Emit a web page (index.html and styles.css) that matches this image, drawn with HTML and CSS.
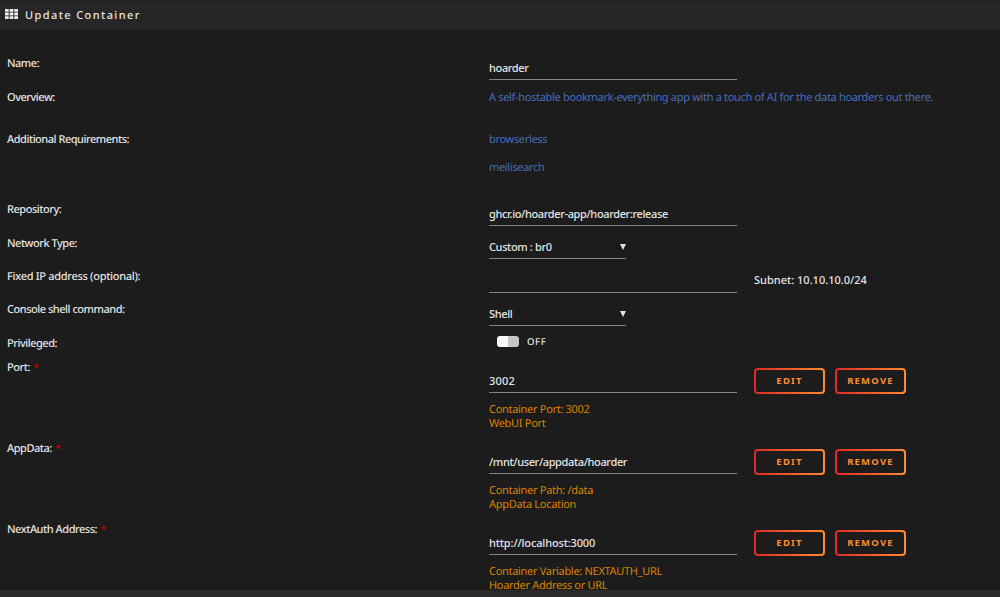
FILE: index.html
```html
<!DOCTYPE html>
<html lang="en">
  <head>
    <meta charset="UTF-8" />
    <meta name="viewport" content="width=device-width, initial-scale=1.0" />
    <title>Update Container</title>
    <link rel="stylesheet" href="styles.css">
  </head>
  <body>
    <header class="title">
      <svg class="title-icon" viewBox="0 0 13 10" aria-hidden="true">
        <path d="M0 0h3.7v2.8H0zM4.6 0h3.8v2.8H4.6zM9.3 0H13v2.8H9.3zM0 3.6h3.7v2.8H0zM4.6 3.6h3.8v2.8H4.6zM9.3 3.6H13v2.8H9.3zM0 7.2h3.7V10H0zM4.6 7.2h3.8V10H4.6zM9.3 7.2H13V10H9.3z" />
      </svg>
      <h1>Update Container</h1>
    </header>

    <form class="settings">
      <div class="row">
        <label for="name">Name:</label>
        <input id="name" type="text" value="hoarder" />
      </div>
      <div class="row row-overview">
        <span class="label">Overview:</span>
        <a>A self-hostable bookmark-everything app with a touch of AI for the data hoarders out there.</a>
      </div>
      <div class="row row-requires">
        <span class="label">Additional Requirements:</span>
        <div class="requires">
          <a>browserless</a>
          <a>meilisearch</a>
        </div>
      </div>
      <div class="row row-repo">
        <label for="repository">Repository:</label>
        <input id="repository" type="text" value="ghcr.io/hoarder-app/hoarder:release" />
      </div>
      <div class="row">
        <label class="label-network" for="network">Network Type:</label>
        <div class="select">
          <select id="network">
            <option>Custom : br0</option>
          </select>
        </div>
      </div>
      <div class="row row-ip">
        <label class="label-ip" for="ip">Fixed IP address (optional):</label>
        <input id="ip" type="text" />
        <span class="subnet">Subnet: 10.10.10.0/24</span>
      </div>
      <div class="row">
        <label for="shell">Console shell command:</label>
        <div class="select">
          <select id="shell">
            <option>Shell</option>
          </select>
        </div>
      </div>
      <div class="row row-privileged">
        <span class="label">Privileged:</span>
        <div class="toggle">
          <span class="switch"></span>
          <span class="state">OFF</span>
        </div>
      </div>

      <div class="row row-config">
        <label for="port">Port: <span class="required">*</span></label>
        <div class="field">
          <input class="number" id="port" type="text" value="3002" />
          <p class="help">Container Port: 3002<br />WebUI Port</p>
        </div>
        <div class="buttons">
          <button type="button">Edit</button>
          <button type="button">Remove</button>
        </div>
      </div>
      <div class="row row-config">
        <label for="appdata">AppData: <span class="required">*</span></label>
        <div class="field">
          <input id="appdata" type="text" value="/mnt/user/appdata/hoarder" />
          <p class="help">Container Path: /data<br />AppData Location</p>
        </div>
        <div class="buttons">
          <button type="button">Edit</button>
          <button type="button">Remove</button>
        </div>
      </div>
      <div class="row row-config">
        <label for="nextauth">NextAuth Address: <span class="required">*</span></label>
        <div class="field">
          <input class="url" id="nextauth" type="text" value="http://localhost:3000" />
          <p class="help">Container Variable: NEXTAUTH_URL<br />Hoarder Address or URL</p>
        </div>
        <div class="buttons">
          <button type="button">Edit</button>
          <button type="button">Remove</button>
        </div>
      </div>
    </form>

    <footer class="footer"></footer>
  </body>
</html>
```

FILE: styles.css
```css
:root {
  --bg: #1c1c1c;
  --text: #e4e4e4;
  --line: #858585;
  --link: #486dba;
  --help: #d98200;
  --red: #e22828;
  --orange: #ff8c2f;
}

* {
  box-sizing: border-box;
}

body {
  display: flex;
  flex-direction: column;
  height: 100vh;
  margin: 0;
  overflow: hidden;
  background: var(--bg);
  color: var(--text);
  font: 500 11px/18px "Noto Sans", sans-serif;
  text-rendering: geometricPrecision;
}

.title {
  display: flex;
  align-items: center;
  gap: 7px;
  flex: none;
  height: 30px;
  padding-left: 5px;
  border-top: 1px solid #1f1f1f;
  background: #262626;
}

.title-icon {
  width: 13px;
  height: 10px;
  margin-top: -3px;
  fill: #efefef;
}

h1 {
  margin: 0;
  font-size: 11px;
  font-weight: 500;
  letter-spacing: 1.4px;
}

.settings {
  flex: 1;
  min-height: 0;
  padding: 25px 0 0 7px;
}

.row {
  display: grid;
  grid-template-columns: 482px 248px auto;
  align-items: start;
  justify-content: start;
  height: 34px;
}

.row-overview {
  grid-template-columns: 482px auto;
  height: 42px;
}

.row-requires {
  height: 70px;
}

.row-repo,
.row-ip {
  height: 33px;
}

.row-privileged {
  height: 24px;
}

.row-config {
  height: 81px;
}

label,
.label {
  letter-spacing: -0.48px;
}

.label-network {
  margin-top: 1px;
}

.label-ip {
  letter-spacing: -0.3px;
}

a {
  color: var(--link);
  font-weight: 400;
  letter-spacing: -0.32px;
}

.requires {
  display: flex;
  flex-direction: column;
  gap: 10px;
}

input,
select {
  display: block;
  width: 100%;
  height: 21px;
  margin: 4px 0 0;
  padding: 0 0 4px;
  border: 0;
  border-bottom: 1px solid var(--line);
  border-radius: 0;
  outline: 0;
  background: none;
  color: var(--text);
  font: inherit;
  letter-spacing: -0.37px;
  appearance: none;
}

select {
  padding-bottom: 2px;
}

.number {
  letter-spacing: 0.2px;
}

.url {
  letter-spacing: -0.15px;
}

.select {
  position: relative;
  width: 137px;
}

.select::after {
  content: "";
  position: absolute;
  top: 10px;
  right: 0;
  border: 3px solid transparent;
  border-top: 6px solid var(--text);
  border-bottom: 0;
}

.subnet {
  margin: 4px 0 0 17px;
}

.toggle {
  display: flex;
  align-items: center;
  gap: 8px;
  height: 13px;
  padding-left: 8px;
}

.switch {
  width: 22px;
  height: 11px;
  border-radius: 3px;
  background: linear-gradient(90deg, #f8f8f8 11px, #c5c5c5 11px);
}

.state {
  font-size: 9.5px;
  letter-spacing: 0.6px;
}

.required {
  margin-left: 1px;
  color: #d00000;
  font-size: 10px;
  line-height: 1;
}

.field input {
  margin-top: 13px;
}

.help {
  margin: 10px 0 0;
  color: var(--help);
  font-weight: 400;
  letter-spacing: -0.3px;
  line-height: 14.4px;
}

.buttons {
  display: flex;
  gap: 10px;
  padding: 9px 0 0 17px;
}

button {
  width: 71px;
  height: 26px;
  padding: 0;
  border: 2px solid transparent;
  border-radius: 4px;
  background:
    linear-gradient(var(--bg), var(--bg)) padding-box,
    linear-gradient(90deg, var(--red), var(--orange)) border-box;
  color: var(--orange);
  font: 700 9.5px/1 "Noto Sans", sans-serif;
  letter-spacing: 1.2px;
  text-transform: uppercase;
}

.footer {
  z-index: 1;
  flex: none;
  height: 7px;
  background: #2b2a29;
}
```
